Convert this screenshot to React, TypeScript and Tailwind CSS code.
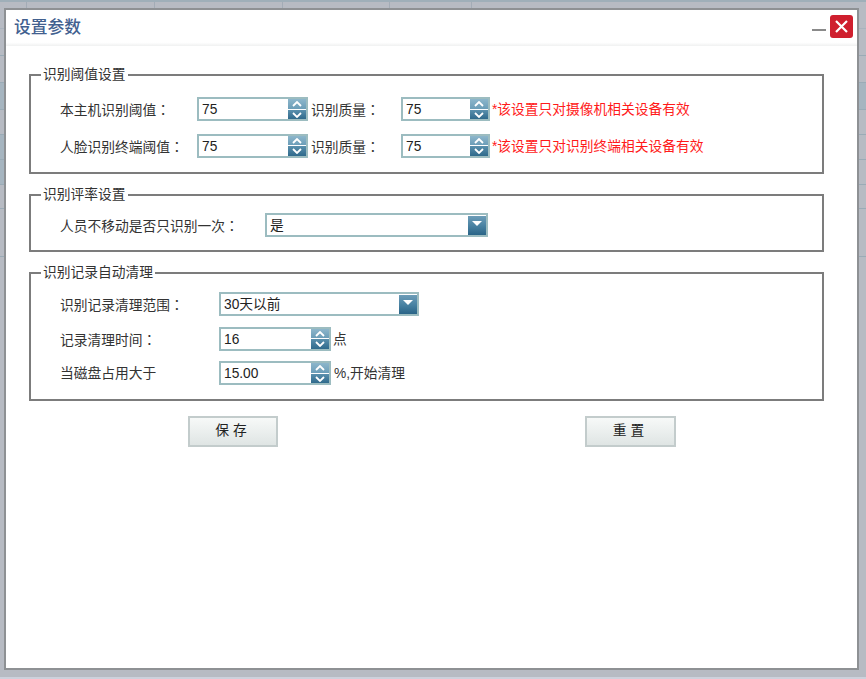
import React from "react";

const cjk = "font-['Liberation_Sans','Noto_Sans_CJK_SC',sans-serif]";

const Chevron = ({ up }: { up?: boolean }) => (
  <svg width="10" height="6" viewBox="0 0 10 6" className="block">
    <polyline
      points={up ? "1,5 5,1 9,5" : "1,1 5,5 9,1"}
      fill="none"
      stroke="#ffffff"
      strokeWidth="1.8"
    />
  </svg>
);

const Spinner = ({ value, width }: { value: string; width: string }) => (
  <div className={`flex h-[24px] shrink-0 items-center border-2 border-[#9cbcc0] bg-white ${width}`}>
    <input
      readOnly
      value={value}
      className="h-full min-w-0 flex-1 pl-[3px] pt-[1px] text-[13.75px] text-[#222] outline-none"
    />
    <div className="flex h-[20px] w-[18px] flex-col gap-px">
      <div className="flex flex-1 items-center justify-center bg-gradient-to-b from-[#8db6cb] to-[#6b9db8]">
        <Chevron up />
      </div>
      <div className="flex flex-1 items-center justify-center bg-gradient-to-b from-[#5a90ad] to-[#2f6a8c]">
        <Chevron />
      </div>
    </div>
  </div>
);

const Select = ({ value, width }: { value: string; width: string }) => (
  <div className={`flex h-[24px] shrink-0 items-center border-2 border-[#9cbcc0] bg-white ${width}`}>
    <span className="flex-1 pl-[3px] pt-[2px] text-[13.75px] text-[#222]">{value}</span>
    <div className="flex h-[19px] w-[18px] items-center justify-center bg-gradient-to-b from-[#6d9db8] via-[#4a83a3] to-[#2a6487]">
      <div className="mb-[3px] h-0 w-0 border-x-[5px] border-t-[5px] border-x-transparent border-t-white" />
    </div>
  </div>
);

const Group = ({
  title,
  height,
  children,
}: {
  title: string;
  height: string;
  children: React.ReactNode;
}) => (
  <div className={`relative w-[795px] border-2 border-[#7c7c7c] ${height}`}>
    <span className="absolute left-[10px] top-[-10px] bg-white px-[2px] text-[13.75px] leading-[18px] text-[#333]">
      {title}
    </span>
    {children}
  </div>
);

// the full width colon sits centred in its cell, as in the TC glyph set
const Label = ({ text, width }: { text: string; width: string }) => {
  const colon = text.endsWith("：");
  return (
    <span className={`shrink-0 pt-[2px] text-[13.75px] text-[#333] ${width}`}>
      {colon ? text.slice(0, -1) : text}
      {colon && <span className="font-['Noto_Sans_CJK_TC',sans-serif]">：</span>}
    </span>
  );
};

const Note = ({ text }: { text: string }) => (
  <span className="ml-[2px] pt-[2px] text-[13.75px] text-[#ff1a1a]">{text}</span>
);

const Button = ({ text, width }: { text: string; width: string }) => (
  <button
    className={`h-[31px] border-2 border-[#c3cccc] bg-gradient-to-b from-[#f7f9f8] to-[#dfe5e4] text-[13.75px] tracking-[4px] text-[#222] ${width}`}
  >
    {text}
  </button>
);

// the page that shows round the edges of the dialog
const backdropRows = [
  "h-[27px]",
  "h-[27px]",
  "h-[27px] bg-[#a6b5c0]",
  "h-[25px]",
  "h-[25px] bg-gradient-to-r from-[#a6b5c0] from-50% to-transparent to-50%",
  "h-[25px] bg-gradient-to-r from-[#a6b5c0] from-50% to-transparent to-50%",
  "h-[24px]",
  "h-[48px]",
];

const Backdrop = () => (
  <div className="absolute inset-0 flex flex-col">
    <div className="h-[2px] bg-[#9fafb9]" />
    <div className="flex h-[27px] border-b border-[#a9b3bd]">
      <div className="w-[27px] border-r border-[#a3acb6]" />
      <div className="w-[128px] border-r border-[#a3acb6]" />
      <div className="w-[128px] border-r border-[#a3acb6]" />
      <div className="w-[107px] border-r border-[#a3acb6]" />
      <div className="w-[82px] border-r border-[#a3acb6]" />
    </div>
    {backdropRows.map((row, i) => (
      <div key={i} className={`border-b border-[#9aabb6] ${row}`} />
    ))}
    <div className="mt-auto h-[2px] bg-[#cdd1dc]" />
  </div>
);

export default function App() {
  return (
    <div className={`relative h-[679px] w-[866px] overflow-hidden bg-[#b7bbc3] pl-[4px] pt-[8px] ${cjk}`}>
      <Backdrop />
      <div className="relative flex h-[662px] w-[855px] flex-col border-2 border-[#8e9194] bg-white">
        <div className="flex h-[36px] items-center justify-between bg-gradient-to-b from-white from-[90%] to-[#f0f1f1] pl-[8px] pr-[4px]">
          <span className="text-[16.75px] font-medium text-[#42608f]">设置参数</span>
          <div className="flex items-center gap-[4px]">
            <div className="mt-[3px] h-[2px] w-[14px] bg-[#8a8a8a]" />
            <div className="mb-[3px] flex h-[23px] w-[23px] items-center justify-center rounded-[3px] bg-[#cf1f2e]">
              <svg width="13" height="13" viewBox="0 0 13 13">
                <path d="M1 1 L12 12 M12 1 L1 12" stroke="#ffffff" strokeWidth="2.2" />
              </svg>
            </div>
          </div>
        </div>

        <div className="flex flex-col gap-[20px] pl-[23px] pt-[28px]">
          <Group title="识别阈值设置" height="h-[100px]">
            <div className="flex flex-col gap-[12px] pl-[29px] pt-[21px]">
              <div className="flex items-center">
                <Label text="本主机识别阈值：" width="w-[137px]" />
                <Spinner value="75" width="w-[111px]" />
                <Label text="识别质量：" width="ml-[3px] w-[90px]" />
                <Spinner value="75" width="w-[89px]" />
                <Note text="*该设置只对摄像机相关设备有效" />
              </div>
              <div className="flex items-center">
                <Label text="人脸识别终端阈值：" width="w-[137px]" />
                <Spinner value="75" width="w-[111px]" />
                <Label text="识别质量：" width="ml-[3px] w-[90px]" />
                <Spinner value="75" width="w-[89px]" />
                <Note text="*该设置只对识别终端相关设备有效" />
              </div>
            </div>
          </Group>

          <Group title="识别评率设置" height="h-[58px]">
            <div className="flex items-center pl-[29px] pt-[17px]">
              <Label text="人员不移动是否只识别一次：" width="w-[205px]" />
              <Select value="是" width="w-[223px]" />
            </div>
          </Group>

          <Group title="识别记录自动清理" height="h-[129px]">
            <div className="flex flex-col gap-[10px] pl-[29px] pt-[18px]">
              <div className="flex items-center">
                <Label text="识别记录清理范围：" width="w-[159px]" />
                <Select value="30天以前" width="w-[200px]" />
              </div>
              <div className="flex items-center">
                <Label text="记录清理时间：" width="w-[159px]" />
                <Spinner value="16" width="w-[112px]" />
                <Label text="点" width="ml-[2px]" />
              </div>
              <div className="flex items-center">
                <Label text="当磁盘占用大于" width="w-[159px]" />
                <Spinner value="15.00" width="w-[112px]" />
                <Label text="%,开始清理" width="ml-[3px]" />
              </div>
            </div>
          </Group>

          <div className="-mt-[5px] flex pl-[159px]">
            <Button text="保存" width="w-[90px]" />
            <Button text="重置" width="ml-[307px] w-[91px]" />
          </div>
        </div>
      </div>
    </div>
  );
}
